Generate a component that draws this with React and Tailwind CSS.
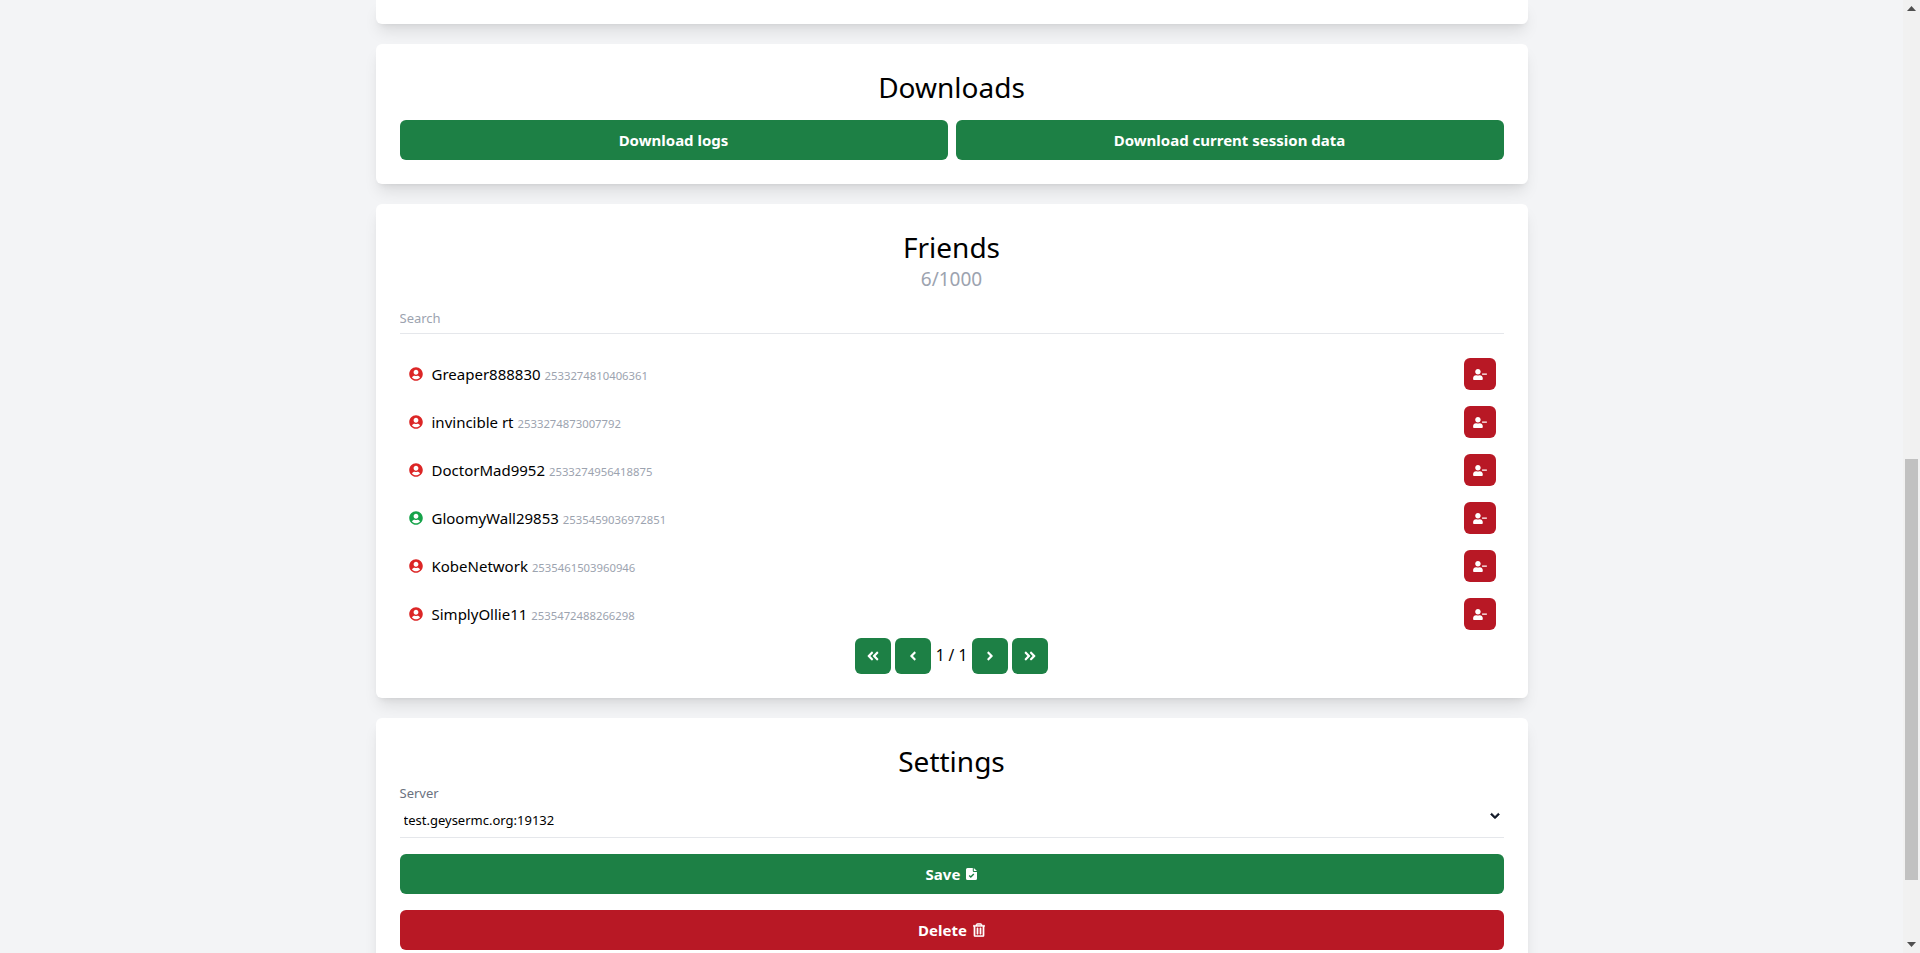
import React from "react";
import { FaUserCircle, FaUserMinus, FaAngleDoubleLeft, FaAngleLeft, FaAngleRight, FaAngleDoubleRight, FaRegTrashAlt, FaChevronDown } from "react-icons/fa";

const friends = [
  ["Greaper888830", "2533274810406361", false],
  ["invincible rt", "2533274873007792", false],
  ["DoctorMad9952", "2533274956418875", false],
  ["GloomyWall29853", "2535459036972851", true],
  ["KobeNetwork", "2535461503960946", false],
  ["SimplyOllie11", "2535472488266298", false],
];

function Card({ children }) {
  return <section className="bg-white rounded-md shadow-lg p-6 shrink-0">{children}</section>;
}

function Btn({ children, color = "green" }) {
  const c = color === "green" ? "bg-[#1d8045]" : "bg-[#b81825]";
  return (
    <button className={`${c} h-10 w-full rounded-md text-white font-bold text-[15px] flex items-center justify-center gap-1.5`}>
      {children}
    </button>
  );
}

function PageBtn({ children }) {
  return (
    <button className="w-9 h-9 rounded-md bg-[#1d8045] text-white flex items-center justify-center text-sm">
      {children}
    </button>
  );
}

function Title({ children, className = "" }) {
  return <h2 className={`text-[28px] leading-9 text-center translate-y-px ${className}`}>{children}</h2>;
}

function SaveIcon() {
  return (
    <svg width="11" height="12" viewBox="0 0 11 12" aria-hidden="true">
      <path d="M1.5 0 H6.8 V3 a1 1 0 0 0 1 1 H11 V10.5 a1.5 1.5 0 0 1 -1.5 1.5 H1.5 A1.5 1.5 0 0 1 0 10.5 V1.5 A1.5 1.5 0 0 1 1.5 0 Z M7.8 0 L11 3 H7.8 Z" fill="#ffffff" />
      <path d="M3.2 7.4 L4.8 9 L7.8 6" fill="none" stroke="#1d8045" strokeWidth="1.4" />
    </svg>
  );
}

export default function App() {
  return (
    <div className="h-screen flex overflow-hidden bg-[#f3f4f6] text-black font-['Noto_Sans',sans-serif]">
      <main className="flex-1 min-w-0 overflow-hidden">
        <div className="w-[1152px] mx-auto flex flex-col gap-5">
          <div className="h-6 bg-white rounded-b-md shadow-lg shrink-0" />

          <Card>
            <Title className="mb-4">Downloads</Title>
            <div className="grid grid-cols-2 gap-2">
              <Btn>Download logs</Btn>
              <Btn>Download current session data</Btn>
            </div>
          </Card>

          <Card>
            <Title>Friends</Title>
            <p className="text-[19px] leading-7 text-center text-[#9ca3af] translate-y-px">6/1000</p>
            <div className="mt-3 border-b border-[#e5e7eb] h-[30px] flex items-center">
              <input
                placeholder="Search"
                className="w-full text-[13px] outline-none placeholder:text-[#9ca3af]"
              />
            </div>
            <ul className="mt-4">
              {friends.map(([name, id, online]) => (
                <li key={id} className="h-12 px-2 flex items-center justify-between">
                  <div className="flex items-center">
                    <span className={`w-4 mr-2 flex justify-center ${online ? "text-[#16a34a]" : "text-[#dc2626]"}`}>
                      <FaUserCircle className="w-[14px] h-[14px]" />
                    </span>
                    <span className="text-[15px]">{name}</span>
                    <span className="text-[11.3px] text-[#9ca3af] ml-1 mt-1">{id}</span>
                  </div>
                  <button className="w-8 h-8 rounded-md bg-[#b81825] text-white flex items-center justify-center">
                    <FaUserMinus className="w-[14px] h-[11px]" />
                  </button>
                </li>
              ))}
            </ul>
            <div className="flex items-center justify-center gap-1">
              <PageBtn><FaAngleDoubleLeft /></PageBtn>
              <PageBtn><FaAngleLeft /></PageBtn>
              <span className="text-[15.5px] w-[33px] text-center whitespace-nowrap">1 / 1</span>
              <PageBtn><FaAngleRight /></PageBtn>
              <PageBtn><FaAngleDoubleRight /></PageBtn>
            </div>
          </Card>

          <Card>
            <Title className="mb-[5px]">Settings</Title>
            <label className="block text-[13px] leading-5 text-[#6b7280]">Server</label>
            <div className="relative mb-4">
              <select className="w-full h-[35px] pl-1 pt-0.5 text-[13px] bg-white border-b border-[#e5e7eb] outline-none appearance-none">
                <option>test.geysermc.org:19132</option>
              </select>
              <FaChevronDown className="absolute right-[4px] top-[8px] w-[10px] h-[10px] text-[#111827] stroke-[40] pointer-events-none" />
            </div>
            <div className="flex flex-col gap-4">
              <Btn>Save <SaveIcon /></Btn>
              <Btn color="red">Delete <FaRegTrashAlt className="w-[12px] h-[14px] stroke-[16]" /></Btn>
            </div>
          </Card>
        </div>
      </main>

      <aside className="w-[17px] shrink-0 bg-[#f1f1f1] flex flex-col">
        <div className="h-[17px] flex items-center justify-center">
          <svg width="9" height="5" viewBox="0 0 9 5"><path d="M4.5 0 L9 5 H0 Z" fill="#505050" /></svg>
        </div>
        <div className="flex-1 pt-[442px] px-[2px]">
          <div className="h-[421px] bg-[#c1c1c1]" />
        </div>
        <div className="h-[17px] flex items-center justify-center">
          <svg width="9" height="5" viewBox="0 0 9 5"><path d="M0 0 H9 L4.5 5 Z" fill="#505050" /></svg>
        </div>
      </aside>
    </div>
  );
}
